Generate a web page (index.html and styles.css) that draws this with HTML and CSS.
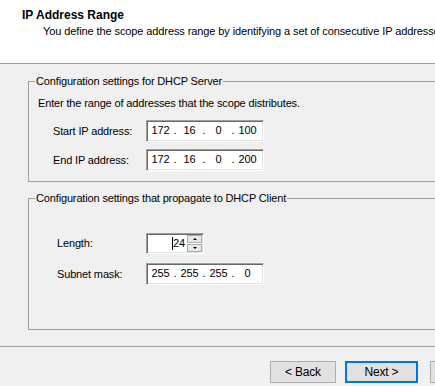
FILE: index.html
```html
<!DOCTYPE html>
<html lang="en">
<head>
    <meta charset="UTF-8">
    <title>New Scope Wizard - IP Address Range</title>
    <link rel="stylesheet" href="styles.css">
</head>
<body>
    <div class="wizard">
        <!-- page header -->
        <header class="page-head">
            <h1 class="page-title">IP Address Range</h1>
            <p class="page-subtitle">You define the scope address range by identifying a set of consecutive IP addresses.</p>
        </header>

        <main class="page-body">
            <fieldset class="group group-server">
                <legend>Configuration settings for DHCP Server</legend>
                <p class="hint">Enter the range of addresses that the scope distributes.</p>

                <div class="row row-first">
                    <label class="row-label">Start IP address:</label>
                    <div class="ip-box">
                        <span class="oct">172</span><span class="dot">.</span><span class="oct">16</span><span class="dot">.</span><span class="oct">0</span><span class="dot">.</span><span class="oct">100</span>
                    </div>
                </div>

                <div class="row">
                    <label class="row-label">End IP address:</label>
                    <div class="ip-box">
                        <span class="oct">172</span><span class="dot">.</span><span class="oct">16</span><span class="dot">.</span><span class="oct">0</span><span class="dot">.</span><span class="oct">200</span>
                    </div>
                </div>
            </fieldset>

            <fieldset class="group group-client">
                <legend>Configuration settings that propagate to DHCP Client</legend>

                <div class="row row-first">
                    <label class="row-label">Length:</label>
                    <div class="spin">
                        <div class="spin-value"><span class="caret"></span>24</div>
                        <div class="spin-buttons">
                            <span class="spin-btn up"></span>
                            <span class="spin-btn down"></span>
                        </div>
                    </div>
                </div>

                <div class="row">
                    <label class="row-label">Subnet mask:</label>
                    <div class="ip-box">
                        <span class="oct">255</span><span class="dot">.</span><span class="oct">255</span><span class="dot">.</span><span class="oct">255</span><span class="dot">.</span><span class="oct">0</span>
                    </div>
                </div>
            </fieldset>
        </main>

        <!-- wizard buttons -->
        <footer class="page-foot">
            <button class="btn btn-back">&lt; Back</button>
            <button class="btn btn-next">Next &gt;</button>
            <button class="btn btn-cancel" aria-label="Cancel"></button>
        </footer>
    </div>
</body>
</html>
```

FILE: styles.css
```css
* {
    margin: 0;
    padding: 0;
    box-sizing: border-box;
}

body {
    background: #f0f0f0;
    color: #000;
    font-family: 'Liberation Sans', Arial, sans-serif;
    font-size: 11px;
    letter-spacing: -0.15px;
    overflow: hidden;
}

.wizard {
    width: 435px;
    height: 386px;
    overflow: hidden;
}

/* header */
.page-head {
    height: 64px;
    background: #fff;
    border-bottom: 1px solid #a0a0a0;
    padding: 8px 0 0 22px;
}

.page-title {
    font-size: 12px;
    font-weight: 700;
    line-height: 15px;
    letter-spacing: 0;
}

.page-subtitle {
    margin: 2px 0 0 21px;
    line-height: 13px;
    letter-spacing: -0.1px;
    white-space: nowrap;
}

/* group boxes */
.page-body {
    overflow: hidden;
    padding-left: 28px;
}

.group {
    border: 1px solid #a0a0a0;
    margin: 10px -30px 0 0;
    padding: 0 0 10px 6px;
    min-width: 0;
}

.group legend {
    padding: 0 1px;
    line-height: 14px;
    white-space: nowrap;
}

.group-server {
    padding-top: 9px;
}

.group-client {
    margin-top: 9px;
    padding-top: 28px;
    padding-bottom: 44px;
}

.hint {
    margin-left: 3px;
    line-height: 13px;
    white-space: nowrap;
}

.row {
    display: flex;
    align-items: center;
    margin-top: 7px;
    padding-left: 18px;
}

.group-server .row-first {
    margin-top: 10px;
}

.group-client .row {
    padding-left: 22px;
    margin-top: 9px;
}

.group-client .row-first {
    margin-top: 0;
}

.row-label {
    width: 93px;
    line-height: 13px;
}

.group-client .row-label {
    width: 89px;
}

/* sunken edit fields */
.ip-box,
.spin {
    background: #fff;
    border: 1px solid;
    border-color: #a0a0a0 #fff #fff #a0a0a0;
    box-shadow: inset 1px 1px 0 #696969, inset -1px -1px 0 #e3e3e3;
}

.ip-box {
    display: flex;
    width: 118px;
    height: 22px;
    padding-left: 2px;
    line-height: 19px;
}

.oct {
    width: 23px;
    text-align: center;
}

.dot {
    width: 6px;
    text-align: center;
}

/* length spinner */
.spin {
    display: flex;
    width: 58px;
    height: 21px;
}

.spin-value {
    flex: 1;
    text-align: right;
    padding-right: 2px;
    line-height: 18px;
}

.caret {
    display: inline-block;
    width: 1px;
    height: 13px;
    background: #000;
    vertical-align: -3px;
}

.spin-buttons {
    width: 16px;
    display: flex;
    flex-direction: column;
    gap: 1px;
    padding: 1px 1px 1px 0;
}

.spin-btn {
    flex: 1;
    background: #e8e8e8;
    border: 1px solid #adadad;
    display: flex;
    align-items: center;
    justify-content: center;
}

.spin-btn::after {
    content: '';
    border-left: 2px solid transparent;
    border-right: 2px solid transparent;
}

.spin-btn.up::after {
    border-bottom: 2px solid #000;
}

.spin-btn.down::after {
    border-top: 2px solid #000;
}

/* footer buttons */
.page-foot {
    margin-top: 16px;
    border-top: 1px solid #a0a0a0;
    padding: 14px 0 0 270px;
    display: flex;
    white-space: nowrap;
}

.btn {
    height: 22px;
    width: 66px;
    flex-shrink: 0;
    background: #e1e1e1;
    border: 1px solid #adadad;
    font-family: inherit;
    font-size: 12px;
    letter-spacing: -0.2px;
    color: #000;
}

.btn-next {
    width: 73px;
    margin-left: 9px;
    border-color: #0078d7;
    box-shadow: inset 0 0 0 1px #0078d7;
}

.btn-cancel {
    width: 75px;
    margin-left: 12px;
}
```
